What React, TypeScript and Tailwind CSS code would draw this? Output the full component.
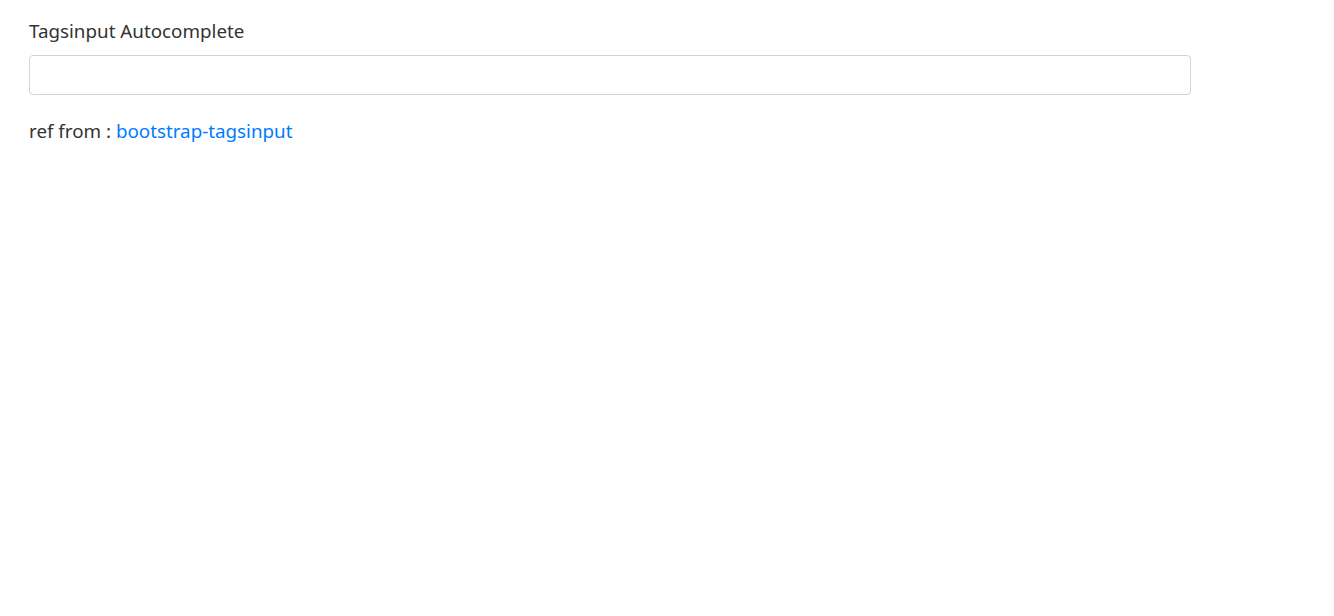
import React from "react";

export default function App() {
  return (
    <div className="min-h-[616px] bg-white text-[#333]" style={{ fontFamily: '"Noto Sans", "Open Sans", sans-serif' }}>
      <div className="pl-[29px] pt-[18px] w-[1191px]">
        <label className="block text-[18.8px] leading-[27px] mb-[10px]">Tagsinput Autocomplete</label>
        <div className="h-[40px] w-full rounded-[4px] border border-[#ced4da] bg-white"></div>
        <p className="mt-[23px] text-[18.8px] leading-[27px]">
          ref from : <a className="text-[#007bff]" href="#">bootstrap-tagsinput</a>
        </p>
      </div>
    </div>
  );
}
